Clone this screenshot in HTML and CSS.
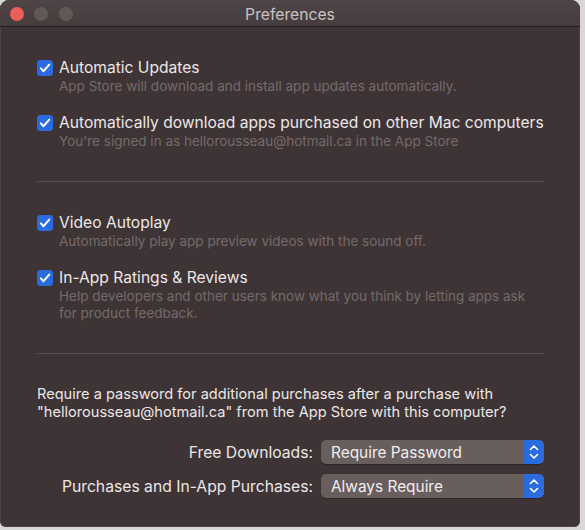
FILE: index.html
```html
<!DOCTYPE html>
<html>
<head>
<meta charset="utf-8">
<link rel="stylesheet" href="styles.css">
</head>
<body>
<div class="window">
  <div class="titlebar">
    <div class="lights">
      <span class="light red"></span>
      <span class="light gray"></span>
      <span class="light gray"></span>
    </div>
    <div class="title">Preferences</div>
  </div>
  <div class="content">
    <div class="option first">
      <span class="checkbox"><svg viewBox="0 0 16 16" width="16" height="16"><path d="M3.8 8.4 L6.6 11.2 L12.2 4.6" fill="none" stroke="#fff" stroke-width="2" stroke-linecap="round" stroke-linejoin="round"/></svg></span>
      <div class="texts">
        <div class="label">Automatic Updates</div>
        <div class="desc">App Store will download and install app updates automatically.</div>
      </div>
    </div>
    <div class="option">
      <span class="checkbox"><svg viewBox="0 0 16 16" width="16" height="16"><path d="M3.8 8.4 L6.6 11.2 L12.2 4.6" fill="none" stroke="#fff" stroke-width="2" stroke-linecap="round" stroke-linejoin="round"/></svg></span>
      <div class="texts">
        <div class="label">Automatically download apps purchased on other Mac computers</div>
        <div class="desc">You're signed in as hellorousseau@hotmail.ca in the App Store</div>
      </div>
    </div>
    <div class="separator"></div>
    <div class="option first">
      <span class="checkbox"><svg viewBox="0 0 16 16" width="16" height="16"><path d="M3.8 8.4 L6.6 11.2 L12.2 4.6" fill="none" stroke="#fff" stroke-width="2" stroke-linecap="round" stroke-linejoin="round"/></svg></span>
      <div class="texts">
        <div class="label">Video Autoplay</div>
        <div class="desc">Automatically play app preview videos with the sound off.</div>
      </div>
    </div>
    <div class="option">
      <span class="checkbox"><svg viewBox="0 0 16 16" width="16" height="16"><path d="M3.8 8.4 L6.6 11.2 L12.2 4.6" fill="none" stroke="#fff" stroke-width="2" stroke-linecap="round" stroke-linejoin="round"/></svg></span>
      <div class="texts">
        <div class="label">In-App Ratings &amp; Reviews</div>
        <div class="desc">Help developers and other users know what you think by letting apps ask<br>for product feedback.</div>
      </div>
    </div>
    <div class="separator"></div>
    <p class="question">Require a password for additional purchases after a purchase with<br>"hellorousseau@hotmail.ca" from the App Store with this computer?</p>
    <div class="settings">
      <div class="setting">
        <span class="setting-label">Free Downloads:</span>
        <div class="popup">
          <span class="popup-value">Require Password</span>
          <span class="popup-arrows"><svg viewBox="0 0 20 24" width="20" height="24"><path d="M6.5 9.5 L10 6 L13.5 9.5 M6.5 14.5 L10 18 L13.5 14.5" fill="none" stroke="#fff" stroke-width="1.6" stroke-linecap="round" stroke-linejoin="round"/></svg></span>
        </div>
      </div>
      <div class="setting">
        <span class="setting-label">Purchases and In-App Purchases:</span>
        <div class="popup">
          <span class="popup-value">Always Require</span>
          <span class="popup-arrows"><svg viewBox="0 0 20 24" width="20" height="24"><path d="M6.5 9.5 L10 6 L13.5 9.5 M6.5 14.5 L10 18 L13.5 14.5" fill="none" stroke="#fff" stroke-width="1.6" stroke-linecap="round" stroke-linejoin="round"/></svg></span>
        </div>
      </div>
    </div>
  </div>
</div>
</body>
</html>
```
FILE: styles.css
```css
html, body {
  margin: 0;
  padding: 0;
}
body {
  background: #d9d7d7;
  width: 585px;
  height: 530px;
  overflow: hidden;
  font-family: Inter, "Liberation Sans", sans-serif;
}
.window {
  width: 580px;
  height: 527px;
  background: #3e3435;
  border-radius: 9px 9px 6px 6px;
  box-shadow: inset 0 0 0 1px #4c4344;
  overflow: hidden;
  display: flex;
  flex-direction: column;
}
.titlebar {
  height: 26px;
  flex: none;
  background: linear-gradient(#4f4546, #463c3d);
  border-bottom: 1px solid #221c1d;
  display: flex;
  align-items: center;
  position: relative;
}
.lights {
  display: flex;
  gap: 10.5px;
  padding-left: 9.5px;
  margin-top: 2px;
}
.light {
  width: 14px;
  height: 14px;
  border-radius: 50%;
  display: block;
}
.light.red { background: #ec5f57; }
.light.gray { background: #615757; }
.title {
  position: absolute;
  left: 0;
  right: 0;
  top: 0;
  height: 26px;
  line-height: 30px;
  text-align: center;
  color: #c9c2c2;
  font-size: 15.7px;
  pointer-events: none;
}
.content {
  padding: 0 36px 0 37px;
  display: flex;
  flex-direction: column;
}
.option {
  display: flex;
  gap: 6px;
  margin-top: 18px;
}
.option.first {
  margin-top: 31px;
}
.checkbox {
  width: 16px;
  height: 16px;
  flex: none;
  border-radius: 3.5px;
  background: #2b6be0;
  margin-top: 2px;
  display: block;
}
.checkbox svg { display: block; }
.label {
  color: #ece7e7;
  font-size: 15.6px;
  line-height: 19px;
  white-space: nowrap;
}
.desc {
  color: #756a6b;
  font-size: 13.5px;
  line-height: 17px;
  margin-top: 1px;
  white-space: nowrap;
}
.separator {
  height: 1px;
  background: #574e4f;
  margin-top: 31px;
}
.question {
  margin: 31px 0 0;
  color: #ece7e7;
  font-size: 14.6px;
  line-height: 18px;
  white-space: nowrap;
}
.settings {
  display: flex;
  flex-direction: column;
  gap: 10px;
  margin-top: 19px;
}
.setting {
  display: flex;
  align-items: center;
  justify-content: flex-end;
  gap: 8px;
}
.setting-label {
  color: #ece7e7;
  font-size: 15.7px;
}
.popup {
  width: 223px;
  height: 24px;
  background: #685e5e;
  border-radius: 5px;
  display: flex;
  align-items: center;
  overflow: hidden;
  box-shadow: 0 1px 1px rgba(0,0,0,0.3);
}
.popup-value {
  flex: 1;
  color: #f1eded;
  font-size: 15.4px;
  padding-left: 10px;
}
.popup-arrows {
  width: 20px;
  height: 24px;
  background: #2b6be0;
  border-radius: 0 5px 5px 0;
  display: block;
}
.popup-arrows svg { display: block; }
```
